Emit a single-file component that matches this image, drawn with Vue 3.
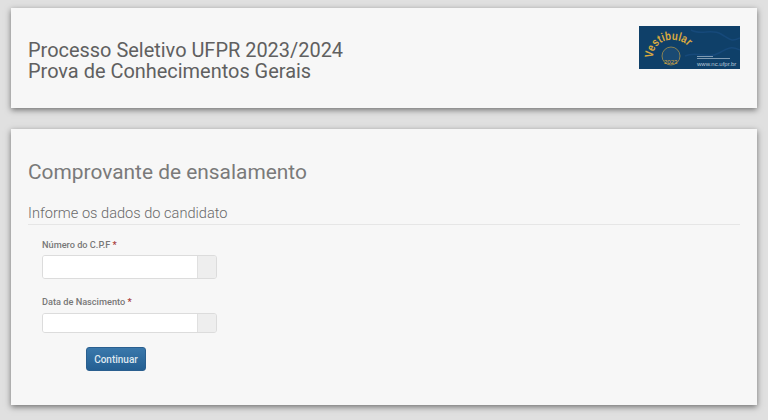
<template>
  <div class="page">
    <header class="panel top">
      <h1 class="title">Processo Seletivo UFPR 2023/2024<br />Prova de Conhecimentos Gerais</h1>
      <svg class="logo" viewBox="0 0 101 43" xmlns="http://www.w3.org/2000/svg">
        <rect width="101" height="43" fill="#0f4069" />
        <path d="M52 4c10 6 20-2 30 4s10 8 19 4M46 30c12-6 22 4 34-3s14-6 21-3" fill="none" stroke="#16497a" stroke-width="1.5" />
        <circle cx="32" cy="30" r="9" fill="#1a4a73" stroke="#d9a93f" stroke-width="0.6" />
        <path id="logoArc" d="M14 32C14 19 24 13 35 14S50 20 52 27" fill="none" />
        <text class="logo-word"><textPath href="#logoArc" textLength="47" lengthAdjust="spacingAndGlyphs">Vestibular</textPath></text>
        <text class="logo-year" x="25" y="38">2023</text>
        <rect x="58" y="30" width="16" height="1" fill="#7f9bb2" />
        <rect x="58" y="32" width="33" height="1" fill="#7f9bb2" />
        <text class="logo-url" x="58" y="40">www.nc.ufpr.br</text>
      </svg>
    </header>

    <main class="panel form-panel">
      <h2 class="heading">Comprovante de ensalamento</h2>
      <h3 class="legend">Informe os dados do candidato</h3>
      <form class="form" @submit.prevent>
        <div v-for="field in fields" :key="field.label" class="field">
          <label class="label">{{ field.label }} <span class="req">*</span></label>
          <div class="input-group" :class="field.size">
            <input class="input" type="text" />
            <span class="addon"></span>
          </div>
        </div>
        <button class="btn" type="submit">Continuar</button>
      </form>
    </main>
  </div>
</template>

<script setup>
const fields = [
  { label: 'Número do C.P.F', size: 'tall' },
  { label: 'Data de Nascimento', size: 'short' },
];
</script>

<style>
html,
body {
  margin: 0;
  background: #e0e0e0;
}
</style>

<style scoped>
.page {
  width: 768px;
  height: 420px;
  box-sizing: border-box;
  padding: 8px 11px 0;
  overflow: hidden;
  background: #e0e0e0;
  font-family: Roboto, "Liberation Sans", sans-serif;
  display: flex;
  flex-direction: column;
  gap: 21px;
}

.panel {
  background: #f7f7f7;
  box-shadow: 0 2px 6px rgba(0, 0, 0, 0.5);
}

.top {
  height: 100px;
  flex: none;
  box-sizing: border-box;
  padding: 18px 17px 0;
  display: flex;
  justify-content: space-between;
  align-items: flex-start;
}

.title {
  margin: 14px 0 0;
  font-size: 19.95px;
  font-weight: 400;
  line-height: 21px;
  color: #606060;
}

.logo {
  width: 101px;
  height: 43px;
  flex: none;
}

.logo-word {
  font-family: "Liberation Sans", sans-serif;
  font-size: 12px;
  font-weight: 700;
  fill: #d9a93f;
}

.logo-year {
  font-family: "Liberation Sans", sans-serif;
  font-size: 6px;
  fill: #d9a93f;
}

.logo-url {
  font-family: "Liberation Sans", sans-serif;
  font-size: 6px;
  fill: #b9cad8;
}

.form-panel {
  height: 276px;
  flex: none;
  box-sizing: border-box;
  padding: 0 17px;
}

.heading {
  margin: 31px 0 0;
  font-size: 20.9px;
  font-weight: 400;
  line-height: 24px;
  color: #7a7a7a;
}

.legend {
  margin: 20px 0 0;
  padding-bottom: 2px;
  font-size: 14.6px;
  font-weight: 300;
  line-height: 18px;
  color: #6a6a6a;
  border-bottom: 1px solid #e6e6e6;
}

.form {
  padding: 13px 0 0 14px;
}

.field {
  margin-bottom: 16px;
}

.label {
  display: block;
  font-size: 9.2px;
  font-weight: 500;
  line-height: 14px;
  color: #777;
  margin-bottom: 4px;
}

.req {
  color: #a94442;
  font-weight: 700;
}

.input-group {
  display: flex;
  width: 175px;
  box-sizing: border-box;
  border: 1px solid #dcdcdc;
  border-radius: 3px;
  overflow: hidden;
}

.input-group.tall {
  height: 24px;
  margin-top: -1px;
}

.input-group.short {
  height: 20px;
}

.input {
  flex: 1;
  min-width: 0;
  border: 0;
  padding: 0;
  background: #fff;
}

.addon {
  width: 18px;
  background: #eeeeee;
  border-left: 1px solid #e0e0e0;
}

.btn {
  display: block;
  width: 60px;
  height: 24px;
  margin: -2px 0 0 44px;
  padding: 0;
  border: 1px solid #2a5f8f;
  border-radius: 3px;
  background: linear-gradient(#3a78ab, #245f92);
  color: #dfe8f0;
  font-family: inherit;
  font-size: 10px;
  font-weight: 500;
}
</style>
